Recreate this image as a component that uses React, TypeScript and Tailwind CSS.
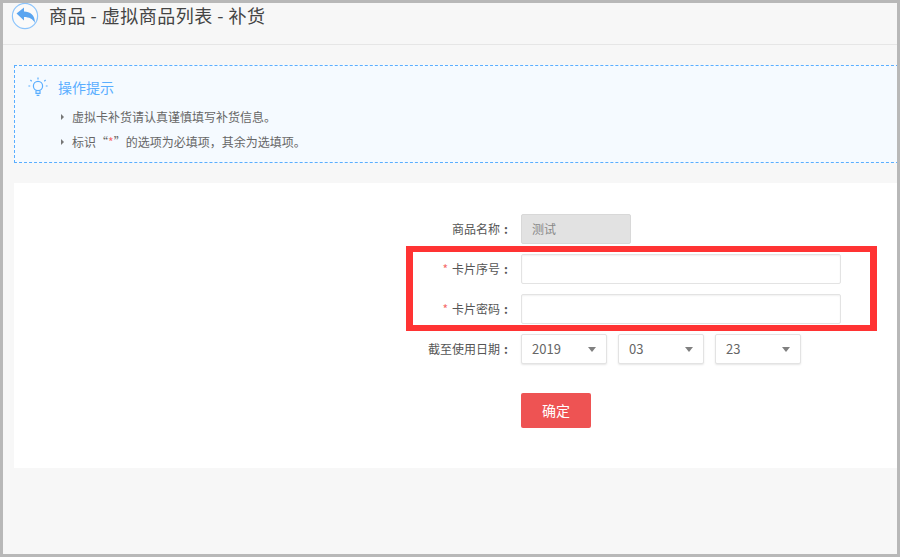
function BackIcon() {
  return (
    <svg width="28" height="28" viewBox="0 0 28 28" className="shrink-0">
      <circle cx="14" cy="14" r="12.6" fill="#fafafa" stroke="#8cc4fb" strokeWidth="1.2" />
      <path d="M5.5 11.5 L13 5.5 V9.5 C19 9.5 24 13 24 21 C22 17 18 15 13 15 V18.5 Z" fill="#5aa5f0" />
    </svg>
  );
}

function BulbIcon() {
  return (
    <svg width="20" height="21" viewBox="0 0 20 21" fill="none" stroke="#5aaeff" strokeWidth="1.2" className="shrink-0">
      <circle cx="10" cy="9" r="4.6" />
      <path d="M8 14v2.4h4V14M8.6 18.4h2.8" />
      <path d="M10 .6v1.8M2.4 3l1.3 1.2M17.6 3l-1.3 1.2M.4 9h1.8M17.8 9h1.8" />
    </svg>
  );
}

function Tip({ children }: { children: React.ReactNode }) {
  return (
    <li className="flex items-center h-[25px] text-xs text-[#666]">
      <span className="w-0 h-0 mr-[8px] border-y-[3px] border-y-transparent border-l-[3px] border-l-[#777]" />
      <span>{children}</span>
    </li>
  );
}

function FormRow({ label, required, children }: { label: string; required?: boolean; children: React.ReactNode }) {
  return (
    <div className="flex items-center h-[30px] mb-[10px]">
      <label className="flex justify-end items-center w-[497px] text-xs text-[#555]">
        {required && <span className="text-[#f56c6c] mr-[4px]">*</span>}
        {label}
        <span className="w-[10px] ml-[1px] text-center font-bold">:</span>
      </label>
      <div className="ml-[10px] flex gap-[11px]">{children}</div>
    </div>
  );
}

function DateSelect({ value }: { value: string }) {
  return (
    <div className="flex items-center justify-between w-[86px] h-[30px] px-[10px] bg-white border border-[#e3e3e3] rounded-[2px] shadow-[0_1px_2px_rgba(0,0,0,0.1)] text-[13px] text-[#666]">
      <span>{value}</span>
      <span className="w-0 h-0 border-x-[4px] border-x-transparent border-t-[5px] border-t-[#808080]" />
    </div>
  );
}

export default function App() {
  return (
    <div
      className="relative w-[900px] h-[557px] overflow-hidden border-[3px] border-[#b8b8b8] bg-[#f7f7f7]"
      style={{ fontFamily: '"Noto Sans CJK SC", "Liberation Sans", sans-serif' }}
    >
      {/* page title */}
      <header className="flex items-center h-[42px] pl-[8px] pb-[15px] gap-[10px] border-b border-[#e6e6e6] bg-[#f7f7f7]">
        <BackIcon />
        <h1 className="-mt-[3px] text-[18px] leading-none text-[#444] tracking-[0.5px] whitespace-pre">商品 - 虚拟商品列表 - 补货</h1>
      </header>

      {/* tips */}
      <section className="ml-[11px] mt-[20px] h-[98px] w-[890px] border border-dashed border-[#5aaeff] bg-[#f5faff] pl-[13px] pt-[11px]">
        <div className="flex items-center gap-[10px]">
          <BulbIcon />
          <span className="text-[14px] text-[#5aaeff]">操作提示</span>
        </div>
        <ul className="mt-[6px] ml-[33px]">
          <Tip>虚拟卡补货请认真谨慎填写补货信息。</Tip>
          <Tip>
            标识“<span className="text-[#f56c6c]">*</span>”的选项为必填项，其余为选填项。
          </Tip>
        </ul>
      </section>

      {/* form card */}
      <section className="ml-[11px] mt-[20px] h-[285px] w-[883px] bg-white pt-[31px]">
        <FormRow label="商品名称">
          <div className="flex items-center w-[110px] h-[30px] pl-[10px] bg-[#e2e2e2] border border-[#d8d8d8] rounded-[2px] text-xs text-[#888]">测试</div>
        </FormRow>
        <FormRow label="卡片序号" required>
          <input className="w-[320px] h-[30px] bg-white border border-[#e3e3e3] rounded-[2px] shadow-[inset_0_1px_2px_rgba(0,0,0,0.06)]" />
        </FormRow>
        <FormRow label="卡片密码" required>
          <input className="w-[320px] h-[30px] bg-white border border-[#e3e3e3] rounded-[2px] shadow-[inset_0_1px_2px_rgba(0,0,0,0.06)]" />
        </FormRow>
        <FormRow label="截至使用日期">
          <DateSelect value="2019" />
          <DateSelect value="03" />
          <DateSelect value="23" />
        </FormRow>
        <button className="block ml-[507px] mt-[29px] w-[70px] h-[35px] rounded-[2px] bg-[#ee5353] text-[14px] text-white">确定</button>
      </section>

      {/* red highlight drawn over the form */}
      <div className="absolute left-[403px] top-[243px] w-[471px] h-[85px] border-x-[7px] border-y-[6px] border-[#ff3333] pointer-events-none" />
    </div>
  );
}
